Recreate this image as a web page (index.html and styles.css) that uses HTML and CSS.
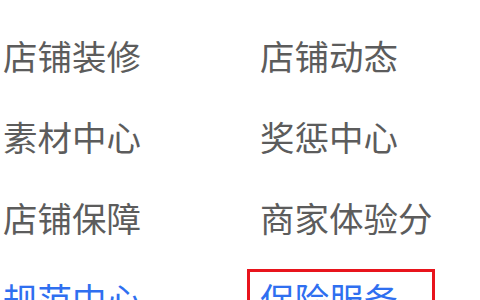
FILE: index.html
```html
<!DOCTYPE html>
<html lang="zh-CN">
<head>
    <meta charset="UTF-8">
    <title>卖家中心</title>
    <link rel="stylesheet" href="styles.css">
</head>
<body>
    <ul class="menu">
        <li class="menu-item">店铺装修</li>
        <li class="menu-item">店铺动态</li>
        <li class="menu-item">素材中心</li>
        <li class="menu-item">奖惩中心</li>
        <li class="menu-item">店铺保障</li>
        <li class="menu-item">商家体验分</li>
        <li class="menu-item link">规范中心</li>
        <li class="menu-item link active">保险服务</li>
    </ul>
</body>
</html>
```

FILE: styles.css
```css
* {
    box-sizing: border-box;
}
body {
    margin: 0;
    background-color: #fff;
    overflow: hidden;
}
.menu {
    list-style: none;
    margin: 0 0 0 -10px;
    padding: 26px 0 0 0;
    display: grid;
    grid-template-columns: 257px 188px;
    row-gap: 22px;
}
.menu-item {
    font-family: "Noto Sans CJK SC", sans-serif;
    font-size: 34.5px;
    line-height: 53px;
    color: #5c5c5c;
    padding: 0 0 0 10px;
    border: 3px solid transparent;
    white-space: nowrap;
}
.menu-item.link {
    color: #2f6ff0;
}
.menu-item.active {
    border-color: #e8141c;
}
```
